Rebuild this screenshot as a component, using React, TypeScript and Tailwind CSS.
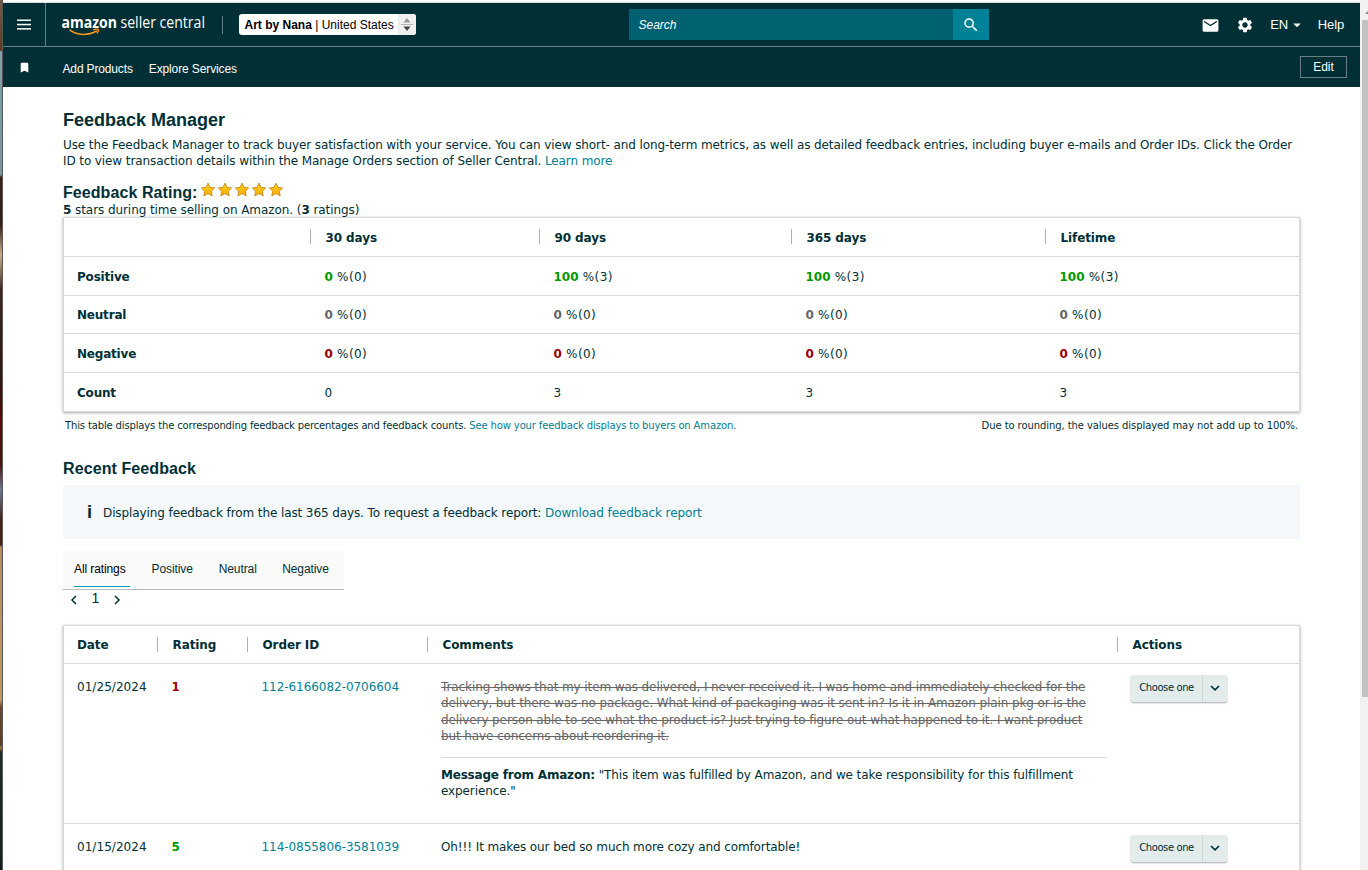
import React from 'react';
import { MdMail, MdSettings, MdArrowDropDown, MdSearch, MdBookmark } from 'react-icons/md';

interface FeedbackEntry {
  date: string;
  rating: number;
  orderId: string;
  comment: string[];
  message?: string[];
}

const periods = ['30 days', '90 days', '365 days', 'Lifetime'];

const summaryRows = [
  { label: 'Positive', color: 'text-[#009900]', height: 'h-[39px]', values: [[0, 0], [100, 3], [100, 3], [100, 3]] },
  { label: 'Neutral', color: 'text-[#666666]', height: 'h-[38px]', values: [[0, 0], [0, 0], [0, 0], [0, 0]] },
  { label: 'Negative', color: 'text-[#990000]', height: 'h-[39px]', values: [[0, 0], [0, 0], [0, 0], [0, 0]] },
];

const counts = [0, 3, 3, 3];

const entries: FeedbackEntry[] = [
  {
    date: '01/25/2024',
    rating: 1,
    orderId: '112-6166082-0706604',
    comment: [
      'Tracking shows that my item was delivered, I never received it. I was home and immediately checked for the',
      'delivery, but there was no package. What kind of packaging was it sent in? Is it in Amazon plain pkg or is the',
      'delivery person able to see what the product is? Just trying to figure out what happened to it. I want product',
      'but have concerns about reordering it.',
    ],
    message: [
      '"This item was fulfilled by Amazon, and we take responsibility for this fulfillment',
      'experience."',
    ],
  },
  {
    date: '01/15/2024',
    rating: 5,
    orderId: '114-0855806-3581039',
    comment: ['Oh!!! It makes our bed so much more cozy and comfortable!'],
  },
];

const Logo: React.FC = () => (
  <svg width="150" height="27" viewBox="0 0 150 27" className="shrink-0 overflow-visible">
    <text x="0.5" y="17" fill="#fff" fontFamily="'Open Sans', sans-serif" fontWeight="700" fontSize="15.5" textLength="55.5" lengthAdjust="spacingAndGlyphs">
      amazon
    </text>
    <text x="59.5" y="17" fill="#fff" fontFamily="'Open Sans', sans-serif" fontSize="15.5" textLength="84.5" lengthAdjust="spacingAndGlyphs">
      seller central
    </text>
    <path d="M9 19.2c7.500 5.600 18.500 5.400 26.500.800" fill="none" stroke="#f7981d" strokeWidth="1.6" strokeLinecap="round" />
    <path d="M32.500 18.700c2-.9 4.600-.8 5-.2.400.7-.3 2.400-1.500 3.700" fill="none" stroke="#f7981d" strokeWidth="1.2" strokeLinecap="round" />
  </svg>
);

const Header: React.FC = () => (
  <header className="bg-[#002f36] text-white font-['Liberation_Sans',sans-serif] tracking-normal">
    <div className="flex h-[44px] border-b border-[#677f82]">
      <div className="flex w-[43px] shrink-0 items-center justify-center border-r border-[#677f82]">
        <svg width="14" height="11" viewBox="0 0 14 11" fill="#fff">
          <rect y="0.5" width="14" height="1.5" />
          <rect y="4.8" width="14" height="1.5" />
          <rect y="9.1" width="14" height="1.5" />
        </svg>
      </div>
      <div className="flex w-[583px] shrink-0 items-center">
        <div className="ml-[15px]"><Logo /></div>
        <span className="ml-[11px] h-[18px] w-px bg-[#677f82]" />
        <div className="ml-4 flex h-[21px] w-[177px] items-center overflow-hidden rounded-[3px] bg-white text-[12px] text-black">
          <span className="w-[159px] whitespace-nowrap pl-[5.5px] pt-px">
            <b>Art by Nana</b> | United States
          </span>
          <span className="flex h-full w-[18px] items-center justify-center bg-[#efefef] pr-px">
            <svg width="14" height="15" viewBox="0 0 14 15">
              <path d="M7 1l3.5 4.500h-7z" fill="#999" />
              <path d="M1 7.500h12" stroke="#b5b5b5" />
              <path d="M7 14l3.5-4.500h-7z" fill="#444" />
            </svg>
          </span>
        </div>
      </div>
      <div className="mt-[6px] flex h-[31px] w-[360px] shrink-0 text-[12px]">
        <div className="flex flex-1 items-center bg-[#006170] pl-[9.5px] pt-px italic">Search</div>
        <button className="flex w-9 items-center justify-center bg-[#008296] pr-px">
          <MdSearch className="h-[18px] w-[18px]" />
        </button>
      </div>
      <div className="ml-auto flex items-center pr-4 pt-px text-[13px]">
        <MdMail className="h-[19px] w-[19px]" />
        <MdSettings className="ml-4 h-[18px] w-[18px]" />
        <span className="ml-4 tracking-[-0.2px]">EN</span>
        <MdArrowDropDown className="h-[18px] w-[18px]" />
        <span className="ml-3 tracking-[-0.15px]">Help</span>
      </div>
    </div>
    <div className="flex h-[40px] items-center text-[12px]">
      <MdBookmark className="ml-[15px] h-[13px] w-[13px]" />
      <span className="ml-[31.5px] mt-1 tracking-[-0.15px]">Add Products</span>
      <span className="ml-4 mt-1 tracking-[-0.12px]">Explore Services</span>
      <button className="ml-auto mr-[13px] h-[22px] w-[47px] border border-[#677f82]">Edit</button>
    </div>
  </header>
);

const Star: React.FC = () => (
  <svg width="17" height="16" viewBox="0 0 17 16">
    <defs>
      <linearGradient id="starFill" x1="0" y1="0" x2="0" y2="1">
        <stop offset="0" stopColor="#ffd21f" />
        <stop offset="1" stopColor="#fbab00" />
      </linearGradient>
    </defs>
    <path
      d="M7 1.200l2 4.200 4.600.6-3.300 3.200.9 4.600L7 11.600l-4.200 2.200.9-4.600L.4 6 5 5.400z"
      fill="url(#starFill)"
      stroke="#cf8f1a"
      strokeWidth="1"
      strokeLinejoin="round"
    />
  </svg>
);

const Separator: React.FC = () => <span className="mr-[14.5px] h-[15px] w-px bg-[#a5b3b5]" />;

const SummaryTable: React.FC = () => (
  <div className="-mt-px border border-[#d5dbdb] shadow-[0_1px_3px_rgba(0,0,0,0.35)]">
    <div className="grid h-[39px] grid-cols-[246px_229px_252px_254px_1fr] border-b border-[#d5dbdb] font-bold">
      <span />
      {periods.map((period) => (
        <div key={period} className="flex items-center">
          <Separator />
          <span className="pt-[2px]">{period}</span>
        </div>
      ))}
    </div>
    {summaryRows.map((row) => (
      <div
        key={row.label}
        className={`grid grid-cols-[246px_229px_252px_254px_1fr] items-center border-b border-[#d5dbdb] pt-[2px] ${row.height}`}
      >
        <b className="pl-[13px] tracking-[-0.2px]">{row.label}</b>
        {row.values.map(([percent, count], i) => (
          <span key={i} className="pl-[14.5px] tracking-[0.4px]">
            <b className={`tracking-normal ${row.color}`}>{percent}</b> %({count})
          </span>
        ))}
      </div>
    ))}
    <div className="grid h-[38px] grid-cols-[246px_229px_252px_254px_1fr] items-center pt-[2px]">
      <b className="pl-[13px] tracking-[-0.2px]">Count</b>
      {counts.map((count, i) => (
        <span key={i} className="pl-[14.5px]">{count}</span>
      ))}
    </div>
  </div>
);

const ChooseButton: React.FC = () => (
  <button className="flex h-[27px] w-[96px] rounded-[2px] bg-[#e3ebeb] text-[10px] tracking-[-0.4px] shadow-[0_1px_2px_rgba(0,0,0,0.35)]">
    <span className="flex h-full w-[72px] items-center justify-center border-r border-[#cdd8d8]">Choose one</span>
    <span className="flex h-full flex-1 items-center justify-center pb-px">
      <svg width="10" height="6" viewBox="0 0 10 6" fill="none" stroke="#002f36" strokeWidth="1.6">
        <path d="M1 1l4 3.800L9 1" />
      </svg>
    </span>
  </button>
);

const FeedbackTable: React.FC = () => (
  <div className="border border-[#d5dbdb] shadow-[0_1px_3px_rgba(0,0,0,0.35)]">
    <div className="grid h-[38px] grid-cols-[93px_90px_180px_690px_1fr] items-center border-b border-[#d5dbdb] font-bold">
      <span className="pl-[13px] pt-px">Date</span>
      {['Rating', 'Order ID', 'Comments', 'Actions'].map((title) => (
        <div key={title} className="flex items-center">
          <Separator />
          <span className="pt-px">{title}</span>
        </div>
      ))}
    </div>
    {entries.map((entry) => (
      <div
        key={entry.orderId}
        className="grid h-[160px] grid-cols-[93px_90px_180px_690px_1fr] border-b border-[#d5dbdb] pt-[15px]"
      >
        <span className="pl-[13px] tracking-[0.05px]">{entry.date}</span>
        <b className={entry.rating > 3 ? 'pl-[14.5px] text-[#009900]' : 'pl-[14.5px] text-[#990000]'}>{entry.rating}</b>
        <a className="pl-[14.5px] tracking-[-0.05px] text-[#007f96]">{entry.orderId}</a>
        <div className="whitespace-nowrap pl-[14px]">
          <div className={entry.message ? 'text-[#666666] line-through' : ''}>
            {entry.comment.map((line) => (
              <div key={line}>{line}</div>
            ))}
          </div>
          {entry.message && (
            <div className="mr-[10px] mt-[13px] border-t border-[#d5dbdb] pt-[9px]">
              <b className="tracking-[-0.2px]">Message from Amazon:</b> {entry.message[0]}
              <br />
              {entry.message[1]}
            </div>
          )}
        </div>
        <div className="-mt-[4px] pl-[14px]">
          <ChooseButton />
        </div>
      </div>
    ))}
  </div>
);

const RatingTabs: React.FC = () => (
  <div className="mt-3 flex h-[39px] w-[281px] border-b border-[#b8bcbc] bg-[#fafafa] pl-[11px] font-['Liberation_Sans',sans-serif] text-[12px]">
    <span className="h-[36px] w-[56px] whitespace-nowrap border-b border-[#00a3b8] pt-[10px] text-black">All ratings</span>
    <span className="ml-[21.5px] pt-[10px]">Positive</span>
    <span className="ml-[26px] pt-[10px]">Neutral</span>
    <span className="ml-[25.5px] pt-[10px]">Negative</span>
  </div>
);

const App: React.FC = () => {
  return (
    <div className="flex h-[870px] w-[1368px] overflow-hidden bg-white font-['DejaVu_Sans',Verdana,sans-serif] text-[12px] leading-[16.25px] tracking-[-0.1px] text-[#002f36]">
      <div className="w-[3px] shrink-0 border-r border-[#555] bg-[linear-gradient(180deg,#7b5a42_0px,#5c3b22_50px,#82a0a8_52px,#789498_175px,#3a2018_177px,#30201a_225px,#c9b08a_255px,#3a2622_290px,#2a1614_380px,#5d0708_420px,#481412_465px,#6d7890_490px,#40241a_520px,#40241a_545px,#b58d5c_547px,#c2985b_700px,#6a4930_707px,#59402c_745px,#a37836_748px,#202b2b_752px,#171d1c_870px)]" />
      <div className="flex w-[1357px] shrink-0 flex-col">
        <div className="h-[3px] shrink-0 border-b border-[#dcdcdc] bg-white" />
        <Header />
        <main className="ml-[60px] w-[1237px] pt-[22px]">
          <h1 className="font-['Liberation_Sans',sans-serif] text-[18px] font-bold leading-[22px] tracking-normal">Feedback Manager</h1>
          <p className="mt-[6px] whitespace-nowrap">
            Use the Feedback Manager to track buyer satisfaction with your service. You can view short- and long-term metrics, as well as detailed feedback entries, including buyer e-mails and Order IDs. Click the Order
            <br />
            ID to view transaction details within the Manage Orders section of Seller Central. <a className="text-[#007f96]">Learn more</a>
          </p>
          <div className="mt-[12px] flex h-[20px]">
            <h2 className="w-[138px] whitespace-nowrap pt-px font-['Liberation_Sans',sans-serif] text-[16px] font-bold leading-[20px] tracking-[0.07px]">Feedback Rating:</h2>
            <div className="flex">
              {[1, 2, 3, 4, 5].map((n) => (
                <Star key={n} />
              ))}
            </div>
          </div>
          <p className="tracking-[-0.07px]">
            <b>5</b> stars during time selling on Amazon. (<b>3</b> ratings)
          </p>
          <SummaryTable />
          <div className="mt-[6px] flex justify-between px-[2px] text-[10px] tracking-[-0.14px]">
            <span>
              This table displays the corresponding feedback percentages and feedback counts. <a className="text-[#007f96]">See how your feedback displays to buyers on Amazon.</a>
            </span>
            <span className="tracking-[-0.08px]">Due to rounding, the values displayed may not add up to 100%.</span>
          </div>
          <h2 className="mt-[25px] font-['Liberation_Sans',sans-serif] text-[16px] font-bold leading-[20px] tracking-[0.1px]">Recent Feedback</h2>
          <div className="mt-[6px] flex h-[54px] items-center bg-[#f4f8fa] pl-6 pt-px">
            <span className="w-4 font-['Liberation_Sans',sans-serif] text-[18px] font-bold">i</span>
            <span className="pt-px">
              Displaying feedback from the last 365 days. To request a feedback report: <a className="text-[#007f96]">Download feedback report</a>
            </span>
          </div>
          <RatingTabs />
          <div className="flex h-[35px] items-start pl-[7px]">
            <svg width="8" height="10" viewBox="0 0 8 10" className="mt-[5px]" fill="none" stroke="#002f36" strokeWidth="1.5">
              <path d="M6 1L2 5l4 4" />
            </svg>
            <span className="ml-[13.5px] w-[9px] font-['Liberation_Sans',sans-serif] text-[14px]">1</span>
            <svg width="8" height="10" viewBox="0 0 8 10" className="ml-[12.5px] mt-[5px]" fill="none" stroke="#002f36" strokeWidth="1.5">
              <path d="M2 1l4 4-4 4" />
            </svg>
          </div>
          <FeedbackTable />
        </main>
      </div>
      <div className="flex w-2 shrink-0 flex-col bg-[#f1f1f1] pl-[2px]">
        <svg width="6" height="20" viewBox="0 0 6 20" className="shrink-0">
          <path d="M3 14l4-4v4z" fill="#8a8a8a" />
        </svg>
        <div className="h-[677px] bg-[#c1c1c1]" />
      </div>
    </div>
  );
};

export default App;
